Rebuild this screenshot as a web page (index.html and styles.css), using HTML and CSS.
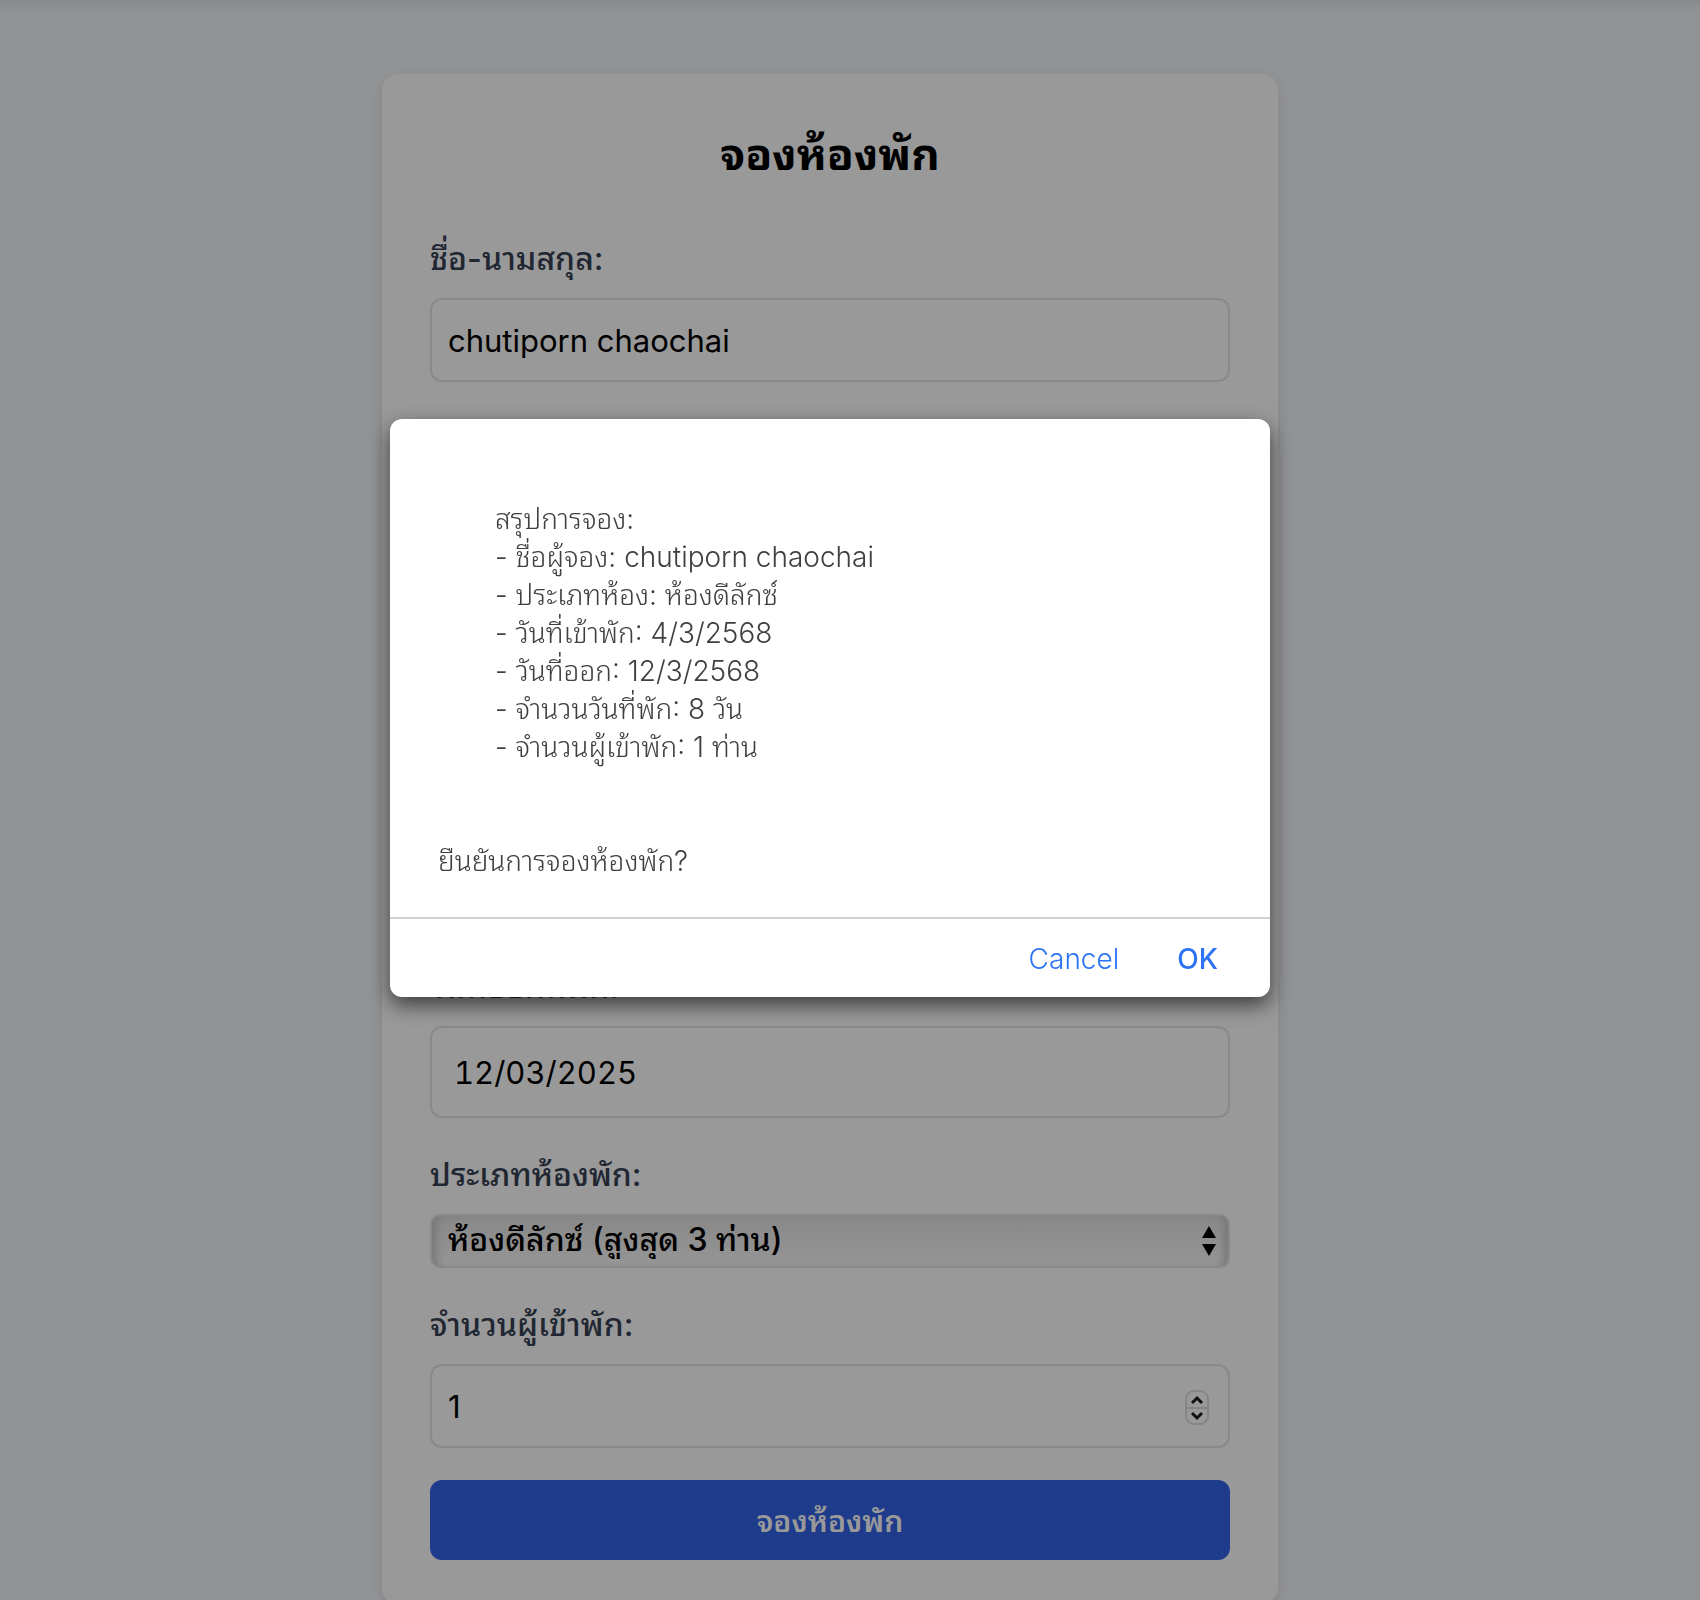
FILE: index.html
```html
<!DOCTYPE html>
<html lang="th">
<head>
<meta charset="utf-8">
<title>จองห้องพัก</title>
<link rel="stylesheet" href="styles.css">
</head>
<body>
<main class="page">
  <form class="card">
    <h1 class="title">จองห้องพัก</h1>
    <div class="field">
      <label class="label" for="name">ชื่อ-นามสกุล:</label>
      <input class="input" id="name" type="text" value="chutiporn chaochai">
    </div>
    <div class="field">
      <label class="label" for="phone">เบอร์โทรศัพท์:</label>
      <input class="input" id="phone" type="tel">
    </div>
    <div class="field">
      <label class="label" for="email">อีเมล:</label>
      <input class="input" id="email" type="text">
    </div>
    <div class="field">
      <label class="label" for="checkin">วันที่เข้าพัก:</label>
      <input class="input input-date" id="checkin" type="text" value="04/03/2025">
    </div>
    <div class="field">
      <label class="label" for="checkout">วันที่ออกที่พัก:</label>
      <input class="input input-date" id="checkout" type="text" value="12/03/2025">
    </div>
    <div class="field">
      <label class="label" for="room">ประเภทห้องพัก:</label>
      <div class="control">
        <select class="select" id="room"><option>ห้องดีลักซ์ (สูงสุด 3 ท่าน)</option></select>
        <svg class="arrows" viewBox="0 0 16 30" aria-hidden="true"><path d="M8 0l7 12H1zM8 30l7-12H1z"/></svg>
      </div>
    </div>
    <div class="field">
      <label class="label" for="guests">จำนวนผู้เข้าพัก:</label>
      <div class="control">
        <input class="input" id="guests" type="text" inputmode="numeric" value="1">
        <svg class="stepper" viewBox="0 0 26 36" aria-hidden="true"><rect x="2" y="2" width="22" height="33" rx="8"/><path d="M2 19h22"/><path class="chevron" d="M8 14l5-5 5 5M8 24l5 5 5-5"/></svg>
      </div>
    </div>
    <button class="submit" type="button">จองห้องพัก</button>
  </form>
</main>
<div class="overlay">
  <section class="dialog" role="dialog" aria-modal="true">
    <div class="message">
      <p class="summary">สรุปการจอง:<br>- ชื่อผู้จอง: chutiporn chaochai<br>- ประเภทห้อง: ห้องดีลักซ์<br>- วันที่เข้าพัก: 4/3/2568<br>- วันที่ออก: 12/3/2568<br>- จำนวนวันที่พัก: 8 วัน<br>- จำนวนผู้เข้าพัก: 1 ท่าน</p>
      <p>ยืนยันการจองห้องพัก?</p>
    </div>
    <div class="actions">
      <button class="action" type="button">Cancel</button>
      <button class="action action-ok" type="button">OK</button>
    </div>
  </section>
</div>
</body>
</html>
```
FILE: styles.css
```css
* { box-sizing: border-box; }
body {
  margin: 0;
  background: #929395;
  font-family: Inter, "Noto Sans Thai Looped", "Noto Sans Thai", "Noto Sans", sans-serif;
  height: 100vh;
  overflow: hidden;
}
.page {
  height: 100vh;
  overflow: hidden;
  padding: 74px 40px 0 0;
  background: linear-gradient(#88898b, #929395 12px);
}
.card {
  max-width: 896px;
  margin: 0 auto;
  padding: 48px 48px 44px;
  border-radius: 16px;
  background: #999;
  box-shadow: 0 4px 12px #00000018;
}
.title {
  margin: 0 0 48px;
  font-size: 44px;
  line-height: 64px;
  text-align: center;
}
.field { margin-bottom: 32px; }
.label {
  display: block;
  margin-bottom: 14px;
  color: #212732;
  font-size: 32px;
  font-weight: 500;
  line-height: 50px;
}
.control { position: relative; }
.input {
  display: block;
  width: 100%;
  height: 84px;
  padding: 0 16px;
  border: 2px solid #88888d;
  border-radius: 12px;
  background: #999;
  color: #000;
  font: 31px Inter, "Noto Sans", sans-serif;
}
.input-date {
  height: 92px;
  padding: 0 22px;
  font-variant-numeric: tabular-nums;
}
.select {
  display: block;
  width: 100%;
  height: 54px;
  padding: 0 16px 4px;
  border: 2px solid #88888d;
  border-radius: 10px;
  appearance: none;
  background: linear-gradient(#888, #969696);
  box-shadow: inset 10px 0 8px -6px #777, inset -10px 0 8px -6px #777;
  color: #000;
  font: 500 32px Inter, "Noto Sans Thai Looped", "Noto Sans Thai", "Noto Sans", sans-serif;
}
.arrows { position: absolute; right: 13px; top: 12px; width: 16px; height: 30px; }
.stepper { position: absolute; right: 20px; top: 25px; width: 26px; height: 36px; fill: none; stroke: #858585; stroke-width: 2; }
.chevron { stroke: #111; stroke-width: 3; }
.submit {
  display: block;
  width: 100%;
  height: 80px;
  padding: 0 0 4px;
  border: 0;
  border-radius: 12px;
  background: #1f3b8b;
  color: #999;
  font: 600 30px Inter, "Noto Sans Thai Looped", "Noto Sans Thai", "Noto Sans", sans-serif;
}
.overlay {
  position: fixed;
  inset: 0;
  padding: 419px 40px 0 0;
}
.dialog {
  max-width: 880px;
  margin: 0 auto;
  border-radius: 12px;
  background: #fff;
  box-shadow: 0 8px 20px #0009;
}
.message {
  padding: 81px 48px 37px;
  color: #404040;
  font-size: 28px;
  font-weight: 300;
  line-height: 38px;
}
.message p { margin: 0; }
.message .summary { margin: 0 0 76px; padding-left: 57px; }
.actions {
  display: flex;
  justify-content: flex-end;
  gap: 58px;
  padding: 20px 52px 18px;
  border-top: 2px solid #d2d2d2;
}
.action {
  padding: 0;
  border: 0;
  background: none;
  color: #2e73f5;
  font: 300 28px/40px Inter, sans-serif;
}
.action-ok { font-weight: 500; }
```
